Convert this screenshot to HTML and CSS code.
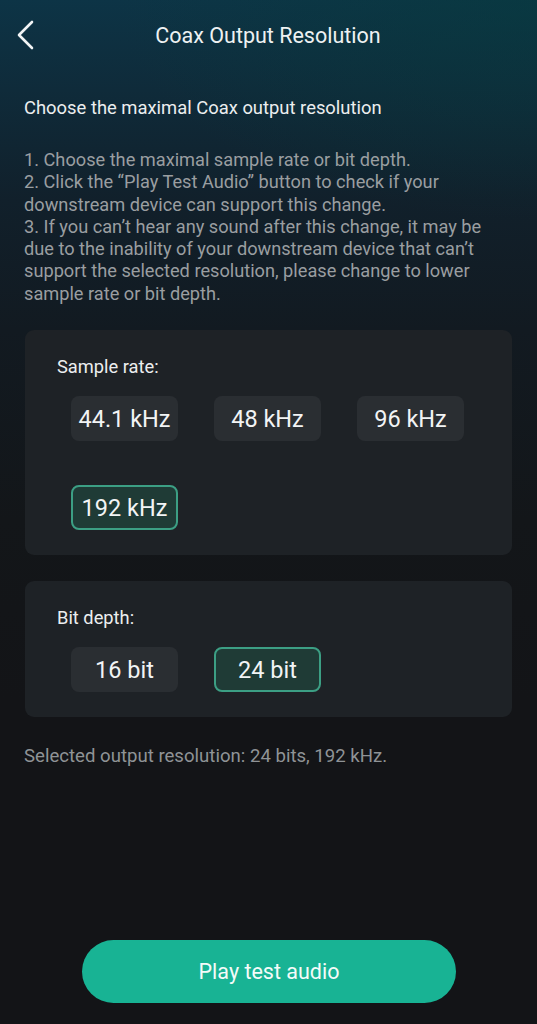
FILE: index.html
```html
<!DOCTYPE html>
<html lang="en">
<head>
<meta charset="utf-8">
<title>Coax Output Resolution</title>
<link rel="stylesheet" href="styles.css">
</head>
<body>
<div class="screen">
  <header class="topbar">
    <span class="back">
      <svg width="20" height="30" viewBox="0 0 20 30"><path d="M16 2 L3 15 L16 28" fill="none" stroke="#f2f4f5" stroke-width="2.6" stroke-linecap="round" stroke-linejoin="round"/></svg>
    </span>
    <h1 class="title">Coax Output Resolution</h1>
  </header>

  <p class="lead">Choose the maximal Coax output resolution</p>

  <p class="steps">1. Choose the maximal sample rate or bit depth.<br>2. Click the “Play Test Audio” button to check if your downstream device can support this change.<br>3. If you can’t hear any sound after this change, it may be due to the inability of your downstream device that can’t support the selected resolution, please change to lower sample rate or bit depth.</p>

  <section class="card">
    <div class="card-label">Sample rate:</div>
    <div class="chips">
      <div class="chip">44.1 kHz</div>
      <div class="chip">48 kHz</div>
      <div class="chip">96 kHz</div>
      <div class="chip selected">192 kHz</div>
    </div>
  </section>

  <section class="card card-bits">
    <div class="card-label">Bit depth:</div>
    <div class="chips">
      <div class="chip">16 bit</div>
      <div class="chip selected">24 bit</div>
    </div>
  </section>

  <p class="summary">Selected output resolution: 24 bits, 192 kHz.</p>

  <div class="spacer"></div>

  <div class="action">
    <button class="play">Play test audio</button>
  </div>
</div>
</body>
</html>
```

FILE: styles.css
```css
* { box-sizing: border-box; }
html, body {
  margin: 0;
  padding: 0;
  height: 100%;
}
body {
  font-family: Roboto, "Noto Sans", "Liberation Sans", sans-serif;
  color: #eef0f1;
  background: #131417;
}
.screen {
  width: 537px;
  height: 1024px;
  display: flex;
  flex-direction: column;
  padding: 0 25px 21px 24px;
  background:
    radial-gradient(ellipse 420px 220px at 100% 0%, rgba(6, 60, 62, 0.55), rgba(6, 60, 62, 0) 100%),
    linear-gradient(to bottom, #0d3446 0px, #0f2b3a 90px, #11202b 200px, #121a21 330px, #131619 520px, #131417 700px);
}
.topbar {
  height: 70px;
  display: flex;
  align-items: center;
  justify-content: center;
  position: relative;
}
.back {
  position: absolute;
  left: -8px;
  top: 20px;
  width: 24px;
  height: 30px;
  display: flex;
}
.title {
  margin: 0;
  font-size: 21.5px;
  font-weight: 400;
  color: #eef1f2;
}
.lead {
  margin: 27px 0 0 0;
  font-size: 18.4px;
  line-height: 22px;
  color: #eceeef;
}
.steps {
  margin: 30px 0 0 0;
  font-size: 18.2px;
  line-height: 22.3px;
  color: #9a9ea1;
}
.card {
  margin: 25px 0 0 1px;
  background: #1e2226;
  border-radius: 9px;
  padding: 27px 20px 25px 32px;
}
.card-bits {
  margin-top: 26px;
}
.card-label {
  font-size: 18.3px;
  line-height: 20px;
  color: #eceeef;
}
.chips {
  display: grid;
  grid-template-columns: 107px 107px 107px;
  column-gap: 36px;
  row-gap: 44px;
  margin: 19px 0 0 14px;
}
.chip {
  height: 45px;
  display: flex;
  align-items: center;
  justify-content: center;
  background: #2a2e32;
  border-radius: 8px;
  font-size: 23.5px;
  color: #f2f4f5;
  border: 2px solid transparent;
  white-space: nowrap;
}
.chip.selected {
  background: #1f3b36;
  border-color: #3c9f84;
}
.summary {
  margin: 28px 0 0 0;
  font-size: 18.6px;
  line-height: 22px;
  color: #8f9396;
}
.spacer { flex: 1; }
.action {
  display: flex;
  justify-content: center;
  padding-left: 2px;
}
.play {
  width: 374px;
  height: 63px;
  border: none;
  border-radius: 32px;
  background: #18b394;
  color: #f4fbf9;
  font-family: Roboto, "Noto Sans", "Liberation Sans", sans-serif;
  font-size: 21.5px;
  cursor: pointer;
}
```
